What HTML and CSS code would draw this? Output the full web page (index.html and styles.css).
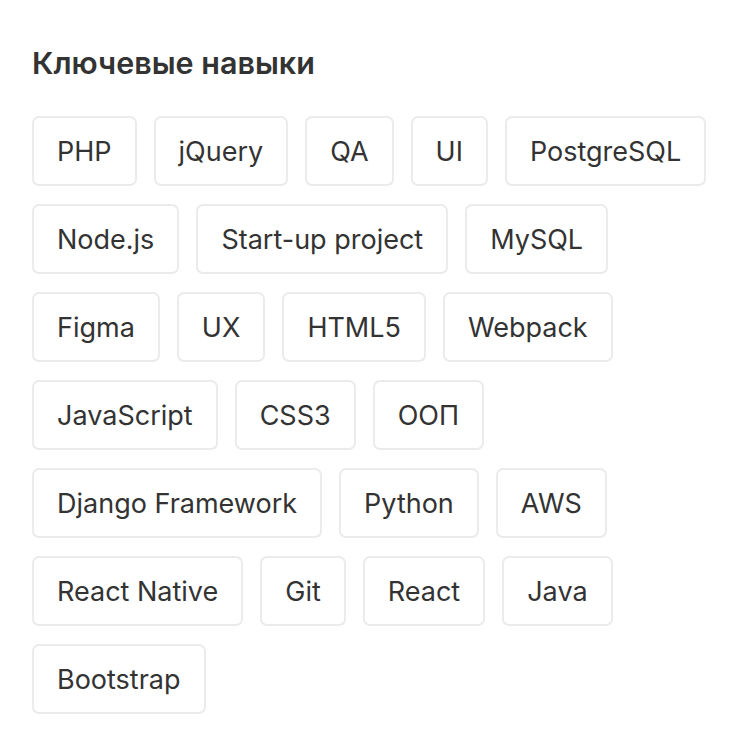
FILE: index.html
```html
<!DOCTYPE html>
<html lang="ru">
<head>
<meta charset="utf-8">
<link rel="stylesheet" href="styles.css">
</head>
<body>
<section class="skills">
  <h2 class="skills-title">Ключевые навыки</h2>
  <div class="tags">
    <span class="tag">PHP</span>
    <span class="tag">jQuery</span>
    <span class="tag">QA</span>
    <span class="tag">UI</span>
    <span class="tag">PostgreSQL</span>
    <span class="tag">Node.js</span>
    <span class="tag">Start-up project</span>
    <span class="tag">MySQL</span>
    <span class="tag">Figma</span>
    <span class="tag">UX</span>
    <span class="tag">HTML5</span>
    <span class="tag">Webpack</span>
    <span class="tag">JavaScript</span>
    <span class="tag">CSS3</span>
    <span class="tag">ООП</span>
    <span class="tag">Django Framework</span>
    <span class="tag">Python</span>
    <span class="tag">AWS</span>
    <span class="tag">React Native</span>
    <span class="tag">Git</span>
    <span class="tag">React</span>
    <span class="tag">Java</span>
    <span class="tag">Bootstrap</span>
  </div>
</section>
</body>
</html>
```

FILE: styles.css
```css
html, body {
  margin: 0;
  padding: 0;
  background: #ffffff;
}
body {
  font-family: Inter, "Noto Sans", "Liberation Sans", sans-serif;
  color: #333333;
}
.skills {
  padding: 41px 32px 0 32px;
}
.skills-title {
  margin: 0 0 31px 0;
  font-size: 30.5px;
  font-weight: 600;
  line-height: 44px;
  color: #333333;
}
.tags {
  display: flex;
  flex-wrap: wrap;
  gap: 18px 17px;
}
.tag {
  box-sizing: border-box;
  height: 70px;
  display: inline-flex;
  align-items: center;
  padding: 0 23px;
  border: 2px solid #ebebeb;
  border-radius: 7px;
  font-size: 27px;
  color: #333333;
}
```
